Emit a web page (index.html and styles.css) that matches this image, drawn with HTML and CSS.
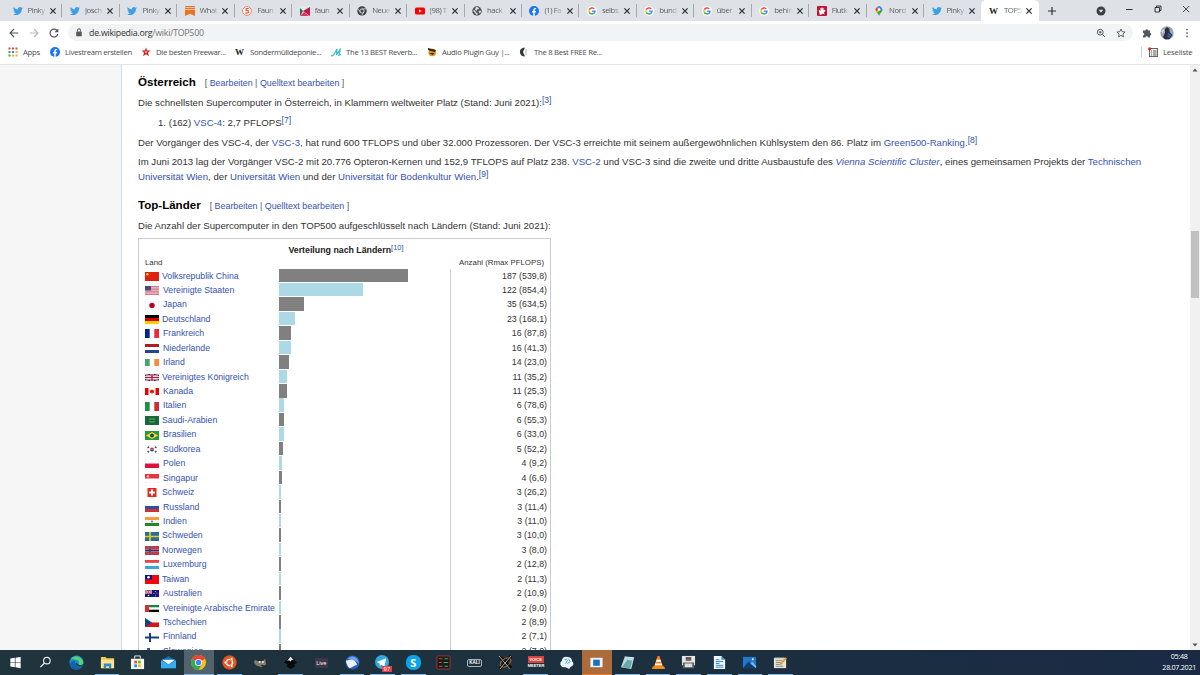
FILE: index.html
```html
<!DOCTYPE html>
<html lang="de">
<head>
<meta charset="utf-8">
<title>TOP500 – Wikipedia</title>
<link rel="stylesheet" href="styles.css">
</head>
<body>
<svg class="defs" aria-hidden="true">
<symbol id="bird" viewBox="0 0 24 24"><path fill="#3c9fe8" d="M24 4.6a10 10 0 0 1-2.8.8 5 5 0 0 0 2.1-2.7 10 10 0 0 1-3.1 1.2 4.9 4.9 0 0 0-8.4 4.5A14 14 0 0 1 1.700 3.100a4.900 4.900 0 0 0 1.500 6.600 5 5 0 0 1-2.200-.6 4.900 4.900 0 0 0 4 4.900 5 5 0 0 1-2.300.1 4.900 4.900 0 0 0 4.600 3.400A9.900 9.900 0 0 1 0 19.500 14 14 0 0 0 21.500 7.100 10 10 0 0 0 24 4.600z"/></symbol>
<symbol id="goog" viewBox="0 0 20 20"><circle cx="10" cy="10" r="10" fill="#fff"/><g fill="none" stroke-width="2.800"><path stroke="#ea4335" d="M14.500 5.800A6 6 0 0 0 4.600 7.300"/><path stroke="#fbbc05" d="M4.600 7.300a6 6 0 0 0 0 5.400"/><path stroke="#34a853" d="M4.600 12.700a6 6 0 0 0 9.100 2"/><path stroke="#4285f4" d="M13.700 14.700A6 6 0 0 0 16 10.200h-6"/></g></symbol>
<symbol id="fb" viewBox="0 0 20 20"><circle cx="10" cy="10" r="10" fill="#1877f2"/><path fill="#fff" d="M8.500 20v-7H6v-3h2.500V8c0-2.600 1.500-4 3.800-4l2 .2v2.500H13c-1.200 0-1.600.7-1.600 1.500V10h2.800l-.5 3h-2.300v7z"/></symbol>
<symbol id="x" viewBox="0 0 8 8"><path stroke="#333" stroke-width="1.300" d="M1.400 1.400l5.200 5.200M6.600 1.400L1.400 6.600"/></symbol>
<symbol id="chrome" viewBox="0 0 20 20"><circle cx="10" cy="10" r="10" fill="#fbc116"/><path fill="#ea4335" d="M10 10L1.300 5a10 10 0 0 1 17.400 0z"/><path fill="#34a853" d="M10 10L1.300 5A10 10 0 0 0 10 20l5-8z"/><circle cx="10" cy="10" r="4.800" fill="#fff"/><circle cx="10" cy="10" r="3.700" fill="#4285f4"/></symbol>
<symbol id="uj" viewBox="0 0 14 9" preserveAspectRatio="none"><path fill="#26336b" d="M0 0h14v9H0z"/><path stroke="#fff" stroke-width="1.800" d="M0 0l14 9M14 0L0 9"/><path stroke="#cf142b" stroke-width=".7" d="M0 0l14 9M14 0L0 9"/><path stroke="#fff" stroke-width="3" d="M7 0v9M0 4.500h14"/><path stroke="#cf142b" stroke-width="1.600" d="M7 0v9M0 4.500h14"/></symbol>
</svg>

<header class="tabs">
  <div class="tab"><svg><use href="#bird"/></svg><span>Pinky</span><svg class="close"><use href="#x"/></svg></div>
  <div class="tab"><svg><use href="#bird"/></svg><span>Josch</span><svg class="close"><use href="#x"/></svg></div>
  <div class="tab"><svg><use href="#bird"/></svg><span>Pinky</span><svg class="close"><use href="#x"/></svg></div>
  <div class="tab"><svg viewBox="0 0 10 10"><path fill="#e87521" d="M0 0h10v1.200H0zM0 2h10v1.200H0zM0 4h10v6L5 7.800 0 10z"/></svg><span>What</span><svg class="close"><use href="#x"/></svg></div>
  <div class="tab"><svg viewBox="0 0 12 12"><circle cx="6" cy="6" r="5.300" fill="#fff" stroke="#ed6b42"/><path fill="none" stroke="#e85125" stroke-width="1.300" d="M8 3H5v2.500h1.500a1.500 1.500 0 0 1 0 3H4"/></svg><span>Faun</span><svg class="close"><use href="#x"/></svg></div>
  <div class="tab"><svg viewBox="0 0 10 10"><path fill="#d8f0e2" d="M0 0h10v10H0z"/><path fill="#c2164c" d="M10 1v9L3 5z"/><path fill="#355f58" d="M0 2l3 3-3 5z"/><path fill="#e33458" d="M0 10l4-4 5 4z"/></svg><span>faun</span><svg class="close"><use href="#x"/></svg></div>
  <div class="tab"><svg viewBox="0 0 20 20"><circle cx="10" cy="10" r="9.500" fill="#3f4246"/><circle cx="10" cy="10" r="4.200" fill="none" stroke="#dee1e6" stroke-width="1.800"/><path stroke="#dee1e6" stroke-width="1.500" d="M10 5.800h8M6.400 12L2 5M13.500 12l-4 7"/></svg><span>Neue</span><svg class="close"><use href="#x"/></svg></div>
  <div class="tab"><svg viewBox="0 0 10 10"><rect y="1.500" width="10" height="7" rx="1.500" fill="red"/><path fill="#fff" d="M4 3.400v3.200L6.800 5z"/></svg><span>(98) T</span><svg class="close"><use href="#x"/></svg></div>
  <div class="tab"><svg viewBox="0 0 20 20"><circle cx="10" cy="10" r="9.500" fill="#505357"/><path fill="#dee1e6" d="M3 7l4 3 1 3 3 1v4l-3-1-2-4-3-2zM8 2l5 1 1 3-4 1-1 3-3-3zM13 10l4-1 1 3-3 3z"/></svg><span>hack</span><svg class="close"><use href="#x"/></svg></div>
  <div class="tab"><svg><use href="#fb"/></svg><span>(1) Fa</span><svg class="close"><use href="#x"/></svg></div>
  <div class="tab"><svg><use href="#goog"/></svg><span>selbs</span><svg class="close"><use href="#x"/></svg></div>
  <div class="tab"><svg><use href="#goog"/></svg><span>bund</span><svg class="close"><use href="#x"/></svg></div>
  <div class="tab"><svg><use href="#goog"/></svg><span>über</span><svg class="close"><use href="#x"/></svg></div>
  <div class="tab"><svg><use href="#goog"/></svg><span>behin</span><svg class="close"><use href="#x"/></svg></div>
  <div class="tab"><svg viewBox="0 0 20 20"><rect width="20" height="20" rx="2" fill="#c4122f"/><path fill="#fff" d="M5 17v-4L3 9l2-1 2 2V4l2-1 1 3 1-3 2 1v5l3-2 1 2-3 4 1 4-4-2-3 3z"/></svg><span>Flutk</span><svg class="close"><use href="#x"/></svg></div>
  <div class="tab"><svg viewBox="0 0 20 20"><path fill="#34a853" d="M10 20C9 15 3 12 3 7h14c0 5-6 8-7 13z"/><path fill="#fbbc04" d="M4 10l6-5 2 3-6 6z"/><path fill="#ea4335" d="M3 7q0-3 3-5l4 5-5 3z"/><path fill="#4285f4" d="M6 2q5-4 9 1 2 2 2 5l-5-1z"/><circle cx="10" cy="7" r="2.600" fill="#fff"/></svg><span>Nord</span><svg class="close"><use href="#x"/></svg></div>
  <div class="tab"><svg><use href="#bird"/></svg><span>Pinky</span><svg class="close"><use href="#x"/></svg></div>
  <div class="tab active"><b class="w">W</b><span>TOP5</span><svg class="close"><use href="#x"/></svg></div>
  <svg class="plus" viewBox="0 0 10 10"><path stroke="#333" stroke-width="1.200" d="M5 1v8M1 5h8"/></svg>
  <div class="win">
    <svg viewBox="0 0 10 10"><circle cx="5" cy="5" r="4.500" fill="#3c4043"/><path fill="#dee1e6" d="M2.700 3.800h4.600L5 6.800z"/></svg>
    <svg viewBox="0 0 10 10"><path stroke="#333" d="M2 5.500h6.500"/></svg>
    <svg viewBox="0 0 10 10"><path fill="none" stroke="#222" stroke-width=".9" d="M2 3.500h4.500V8H2zM3.500 3.500V2H8v4.500H6.500"/></svg>
    <svg viewBox="0 0 10 10"><path stroke="#222" stroke-width=".8" d="M2 2l6.200 6.200M8.200 2L2 8.200"/></svg>
  </div>
</header>

<nav class="toolbar">
  <svg viewBox="0 0 10 10"><path fill="none" stroke="#555" stroke-width="1.100" d="M9.200 5H1.200M5 1L1 5l4 4"/></svg>
  <svg viewBox="0 0 10 10"><path fill="none" stroke="#b8babd" stroke-width="1.100" d="M.8 5h8M5 1l4 4-4 4"/></svg>
  <svg viewBox="0 0 10 10"><path fill="none" stroke="#555" stroke-width="1.200" d="M8.300 3A3.900 3.900 0 1 0 8.800 6"/><path fill="#555" d="M9.300.5v3.800H5.500z"/></svg>
  <div class="omnibox">
    <svg class="lock" viewBox="0 0 8 9"><rect x="1.200" y="3.500" width="5.600" height="4.700" rx=".6" fill="#55585c"/><path fill="none" stroke="#55585c" stroke-width="1" d="M2.500 3.500V2.200a1.500 1.500 0 0 1 3 0v1.300"/></svg>
    <p>de.wikipedia.org<i>/wiki/TOP500</i></p>
    <svg viewBox="0 0 10 10"><circle cx="4.200" cy="4.200" r="2.900" fill="none" stroke="#55585c"/><path stroke="#55585c" d="M6.400 6.400L9 9M2.900 4.200h2.600M4.200 2.900v2.600"/></svg>
    <svg viewBox="0 0 10 10"><path fill="none" stroke="#55585c" stroke-width=".9" d="M5 1l1.200 2.700 2.900.3-2.200 2 .6 2.900L5 7.400 2.500 8.900l.6-2.900L.9 4l2.900-.3z"/></svg>
  </div>
  <svg class="ext" viewBox="0 0 20 20"><path fill="#55585c" d="M2 5h5a2.500 2.500 0 1 1 5 0h4v5a2.500 2.500 0 1 1 0 5v4h-4a2.500 2.500 0 0 0-5 0H2v-4a2.500 2.500 0 0 0 0-5z"/></svg>
  <svg class="avatar" viewBox="0 0 14 14"><circle cx="7" cy="7" r="6.700" fill="#9da5ae"/><path fill="#263042" d="M5 3l2-2 2.500 2v3l3 3-3 4.300H5L3 11l2-4z"/><path fill="#3a59a0" d="M8 7l3 1-1 4-3-1z"/><path fill="#d5d8d8" d="M1 5l3-2-1 5z"/></svg>
  <svg viewBox="0 0 10 10"><path fill="#55585c" d="M4.300.8h1.500v1.500H4.300zM4.300 4.300h1.500v1.500H4.300zM4.300 7.800h1.500v1.500H4.300z"/></svg>
</nav>

<nav class="bookmarks">
  <a class="bm-apps"><svg viewBox="0 0 10 10"><path fill="#e04a3a" d="M.5.500h2v2h-2zM4 .5h2v2H4zM7.500.500h2v2h-2z"/><path fill="#32a852" d="M.5 4h2v2h-2z"/><path fill="#3c7de0" d="M4 4h2v2H4z"/><path fill="#f0b323" d="M7.500 4h2v2h-2zM4 7.500h2v2H4zM7.500 7.500h2v2h-2z"/><path fill="#32a852" d="M.5 7.500h2v2h-2z"/></svg>Apps</a>
  <a class="bm-live"><svg><use href="#fb"/></svg>Livestream erstellen</a>
  <a class="bm-free"><svg viewBox="0 0 10 10"><path fill="#cf2a22" d="M5 .5l1.200 3h3.300L7 5.700l1 3.600-3-2-3 2 1-3.600L.5 3.500h3.300z"/><circle cx="5" cy="5" r="1" fill="#f4c9c3"/></svg>Die besten Freewar...</a>
  <a class="bm-sonder"><b class="w">W</b>Sondermülldeponie...</a>
  <a class="bm-reverb"><svg viewBox="0 0 10 10"><path fill="none" stroke="#43bccb" stroke-width="1.300" d="M0 8.500q2 1 3.500-2L6 2 5.500 8 9.500 1.500 8 8l2-.5"/></svg>The 13 BEST Reverb...</a>
  <a class="bm-audio"><svg viewBox="0 0 10 10"><circle cx="5.200" cy="5.500" r="3.800" fill="#d09a1d"/><path fill="#3c2415" d="M1 1l4 1 4 1-1 2-4-1-3-1zM2 6h5l-1 2z"/></svg>Audio Plugin Guy |...</a>
  <a class="bm-best"><svg viewBox="0 0 10 10"><path fill="#333a3c" d="M6 .5Q0 1 1 6q1 3.500 5 3.500L4 5z"/><path stroke="#b5bcbc" d="M7 2v6"/></svg>The 8 Best FREE Re...</a>
  <a class="bm-list"><svg viewBox="0 0 10 10"><rect x="1.500" y="1.500" width="8" height="8" fill="#eee" stroke="#666"/><path stroke="#666" d="M3 4h1M5 4h3.500M3 6h1M5 6h3.500M3 8h1M5 8h3.500"/><circle cx="1.600" cy="1.800" r="1.600" fill="#d93025"/></svg>Leseliste</a>
</nav>

<div class="page">
  <aside class="side"></aside>
  <main>
    <h3>Österreich<small>[ <a>Bearbeiten</a> | <a>Quelltext bearbeiten</a> ]</small></h3>
    <p class="p1">Die schnellsten Supercomputer in Österreich, in Klammern weltweiter Platz (Stand: Juni 2021):<sup>[3]</sup></p>
    <p class="item">1. (162) <a>VSC-4</a>: 2,7 PFLOPS<sup>[7]</sup></p>
    <p class="p2">Der Vorgänger des VSC-4, der <a>VSC-3</a>, hat rund 600 TFLOPS und über 32.000 Prozessoren. Der VSC-3 erreichte mit seinem außergewöhnlichen Kühlsystem den 86. Platz im <a>Green500-Ranking</a>.<sup>[8]</sup></p>
    <p class="p3">Im Juni 2013 lag der Vorgänger VSC-2 mit 20.776 Opteron-Kernen und 152,9 TFLOPS auf Platz 238. <a>VSC-2</a> und VSC-3 sind die zweite und dritte Ausbaustufe des <a><em>Vienna Scientific Cluster</em></a>, eines gemeinsamen Projekts der <a>Technischen<br>Universität Wien</a>, der <a>Universität Wien</a> und der <a>Universität für Bodenkultur Wien</a>.<sup>[9]</sup></p>
    <h3 class="top">Top-Länder<small>[ <a>Bearbeiten</a> | <a>Quelltext bearbeiten</a> ]</small></h3>
    <p class="p4">Die Anzahl der Supercomputer in den TOP500 aufgeschlüsselt nach Ländern (Stand: Juni 2021):</p>
    <section class="chart">
      <h4>Verteilung nach Ländern<sup>[10]</sup></h4>
      <div class="cols"><span>Land</span><span>Anzahl (Rmax PFLOPS)</span></div>
      <div class="row"><a class="n near"><svg viewBox="0 0 14 9"><path fill="#de2110" d="M0 0h14v9H0z"/><circle cx="2.300" cy="2.300" r="1.200" fill="#fd0"/></svg>Volksrepublik China</a><div class="b"><i style="width:129px"></i></div><span>187 (539,8)</span></div>
      <div class="row"><a class="n"><svg viewBox="0 0 14 9"><path fill="#f0d7da" d="M0 0h14v9H0z"/><path stroke="#cf6070" stroke-width=".8" d="M0 .5h14M0 2.100h14M0 3.700h14M0 5.300h14M0 6.900h14M0 8.500h14"/><path fill="#4a4b7c" d="M0 0h6v4.500H0z"/></svg>Vereinigte Staaten</a><div class="b"><i style="width:84px"></i></div><span>122 (854,4)</span></div>
      <div class="row"><a class="n"><svg viewBox="0 0 14 9"><path fill="#fff" stroke="#ddd" stroke-width=".6" d="M0 0h14v9H0z"/><circle cx="7" cy="4.500" r="2.700" fill="#b5002c"/></svg>Japan</a><div class="b"><i style="width:25px"></i></div><span>35 (634,5)</span></div>
      <div class="row"><a class="n near"><svg viewBox="0 0 14 9"><path d="M0 0h14v3H0z"/><path fill="#d00" d="M0 3h14v3H0z"/><path fill="#fc0" d="M0 6h14v3H0z"/></svg>Deutschland</a><div class="b"><i style="width:16px"></i></div><span>23 (168,1)</span></div>
      <div class="row"><a class="n"><svg viewBox="0 0 14 9"><path fill="#fff" d="M0 0h14v9H0z"/><path fill="#002395" d="M0 0h4.700v9H0z"/><path fill="#ed2939" d="M9.300 0H14v9H9.300z"/></svg>Frankreich</a><div class="b"><i style="width:12px"></i></div><span>16 (87,8)</span></div>
      <div class="row"><a class="n"><svg viewBox="0 0 14 9"><path fill="#fff" d="M0 0h14v9H0z"/><path fill="#ae1c28" d="M0 0h14v3H0z"/><path fill="#21468b" d="M0 6h14v3H0z"/></svg>Niederlande</a><div class="b"><i style="width:12px"></i></div><span>16 (41,3)</span></div>
      <div class="row"><a class="n"><svg viewBox="0 0 14 9"><path fill="#fff" d="M0 0h14v9H0z"/><path fill="#46a56c" d="M0 1h4.700v7H0z"/><path fill="#f58b45" d="M9.300 1H14v7H9.300z"/></svg>Irland</a><div class="b"><i style="width:10px"></i></div><span>14 (23,0)</span></div>
      <div class="row"><a class="n near"><svg viewBox="0 0 14 9"><use href="#uj" y="1" width="14" height="7"/></svg>Vereinigtes Königreich</a><div class="b"><i style="width:8px"></i></div><span>11 (35,2)</span></div>
      <div class="row"><a class="n"><svg viewBox="0 0 14 9"><path fill="#fff" d="M0 0h14v9H0z"/><path fill="#e00" d="M0 1h3.500v7H0zM10.500 1H14v7h-3.500zM7 2l.7 1.200 1.800.3-.8 1.500.3 1-1.700-.2V7.200h-.6V5.800L5 6l.3-1-.8-1.500 1.800-.3z"/></svg>Kanada</a><div class="b"><i style="width:8px"></i></div><span>11 (25,3)</span></div>
      <div class="row"><a class="n"><svg viewBox="0 0 14 9"><path fill="#fff" d="M0 0h14v9H0z"/><path fill="#209048" d="M0 0h4.700v9H0z"/><path fill="#ce2b37" d="M9.300 0H14v9H9.300z"/></svg>Italien</a><div class="b"><i style="width:5px"></i></div><span>6 (78,6)</span></div>
      <div class="row"><a class="n near"><svg viewBox="0 0 14 9"><path fill="#176a36" d="M0 0h14v9H0z"/><path stroke="#a5c9b0" stroke-width=".6" d="M4 3h6M4 5.800h6"/></svg>Saudi-Arabien</a><div class="b"><i style="width:5px"></i></div><span>6 (55,3)</span></div>
      <div class="row"><a class="n"><svg viewBox="0 0 14 9"><path fill="#229b3a" d="M0 0h14v9H0z"/><path fill="#f7dd22" d="M7 1l6 3.500L7 8 1 4.500z"/><circle cx="7" cy="4.500" r="2" fill="#293b87"/></svg>Brasilien</a><div class="b"><i style="width:5px"></i></div><span>6 (33,0)</span></div>
      <div class="row"><a class="n"><svg viewBox="0 0 14 9"><path fill="#fff" stroke="#ddd" stroke-width=".6" d="M0 0h14v9H0z"/><path fill="#c33651" d="M5 4.500a2 2 0 0 1 4 0z"/><path fill="#2f4785" d="M5 4.500a2 2 0 0 0 4 0z"/><path stroke="#444" stroke-width="1.400" d="M2.500 2.800l1.500-1M10 1.800l1.500 1M2.500 6.200l1.500 1M10 7.200l1.500-1"/></svg>Südkorea</a><div class="b"><i style="width:4px"></i></div><span>5 (52,2)</span></div>
      <div class="row"><a class="n"><svg viewBox="0 0 14 9"><path fill="#fff" stroke="#ddd" stroke-width=".6" d="M0 0h14v9H0z"/><path fill="#dc143c" d="M0 4.500h14V9H0z"/></svg>Polen</a><div class="b"><i style="width:3px"></i></div><span>4 (9,2)</span></div>
      <div class="row"><a class="n"><svg viewBox="0 0 14 9"><path fill="#fff" stroke="#ddd" stroke-width=".6" d="M0 0h14v9H0z"/><path fill="#e53440" d="M0 0h14v4.500H0z"/><circle cx="3" cy="2.200" r="1.200" fill="#f7bcc0"/></svg>Singapur</a><div class="b"><i style="width:3px"></i></div><span>4 (6,6)</span></div>
      <div class="row"><a class="n near"><svg viewBox="0 0 14 9"><path fill="#e52b1e" d="M2.500 0h9v9h-9z"/><path stroke="#fff" stroke-width="2" d="M7 1.600v5.800M4.100 4.500h5.800"/></svg>Schweiz</a><div class="b"><i style="width:2px"></i></div><span>3 (26,2)</span></div>
      <div class="row"><a class="n"><svg viewBox="0 0 14 9"><path fill="#fff" d="M0 0h14v9H0z"/><path fill="#2850a4" d="M0 3h14v3H0z"/><path fill="#d5302d" d="M0 6h14v3H0z"/></svg>Russland</a><div class="b"><i style="width:2px"></i></div><span>3 (11,4)</span></div>
      <div class="row"><a class="n"><svg viewBox="0 0 14 9"><path fill="#f5f5f5" d="M0 0h14v9H0z"/><path fill="#f79b3c" d="M0 0h14v3H0z"/><path fill="#218a22" d="M0 6h14v3H0z"/><circle cx="7" cy="4.500" r="1.100" fill="#7777a8"/></svg>Indien</a><div class="b"><i style="width:2px"></i></div><span>3 (11,0)</span></div>
      <div class="row"><a class="n near"><svg viewBox="0 0 14 9"><path fill="#286b9d" d="M0 0h14v9H0z"/><path stroke="#eccb20" stroke-width="1.700" d="M5 0v9M0 4.500h14"/></svg>Schweden</a><div class="b"><i style="width:2px"></i></div><span>3 (10,0)</span></div>
      <div class="row"><a class="n near"><svg viewBox="0 0 14 9"><path fill="#ce3343" d="M0 0h14v9H0z"/><path stroke="#ecc9d0" stroke-width="2.200" d="M5 0v9M0 4.500h14"/><path stroke="#26356d" stroke-width="1.500" d="M5 0v9M0 4.500h14"/></svg>Norwegen</a><div class="b"><i style="width:2px"></i></div><span>3 (8,0)</span></div>
      <div class="row"><a class="n"><svg viewBox="0 0 14 9"><path fill="#fff" d="M0 0h14v9H0z"/><path fill="#e74249" d="M0 0h14v2.800H0z"/><path fill="#35a7df" d="M0 6h14v3H0z"/></svg>Luxemburg</a><div class="b"><i style="width:1.500px"></i></div><span>2 (12,8)</span></div>
      <div class="row"><a class="n near"><svg viewBox="0 0 14 9"><path fill="#f20808" d="M0 0h14v9H0z"/><path fill="#10109a" d="M0 0h7v4.500H0z"/><circle cx="3.500" cy="2.300" r="1.300" fill="#fff"/></svg>Taiwan</a><div class="b"><i style="width:1.500px"></i></div><span>2 (11,3)</span></div>
      <div class="row"><a class="n"><svg viewBox="0 0 14 9"><path fill="#17157c" d="M0 1h14v7H0z"/><use href="#uj" y="1" width="7" height="4"/><circle cx="3.500" cy="6.500" r=".8" fill="#fff"/><path fill="#fff" d="M10 2h.8v.8H10zM8.500 4h.8v.8h-.8zM11.500 3.800h.8v.8h-.8zM10 6.500h.8v.8H10z"/></svg>Australien</a><div class="b"><i style="width:1.500px"></i></div><span>2 (10,9)</span></div>
      <div class="row"><a class="n"><svg viewBox="0 0 14 9"><path fill="#fff" d="M0 1h14v7H0z"/><path fill="#16804a" d="M0 1h14v2.300H0z"/><path d="M0 5.700h14V8H0z"/><path fill="#e02b30" d="M0 1h4v7H0z"/></svg>Vereinigte Arabische Emirate</a><div class="b"><i style="width:1.500px"></i></div><span>2 (9,0)</span></div>
      <div class="row"><a class="n"><svg viewBox="0 0 14 9"><path fill="#f6f6f6" d="M0 0h14v9H0z"/><path fill="#d7141a" d="M0 4.500h14V9H0z"/><path fill="#11457e" d="M0 0l7 4.500L0 9z"/></svg>Tschechien</a><div class="b"><i style="width:1.500px"></i></div><span>2 (8,9)</span></div>
      <div class="row"><a class="n"><svg viewBox="0 0 14 9"><path fill="#fff" d="M0 0h14v9H0z"/><path stroke="#163f7c" stroke-width="2" d="M5 0v9M0 4.500h14"/></svg>Finnland</a><div class="b"><i style="width:1.500px"></i></div><span>2 (7,1)</span></div>
      <div class="row"><a class="n"><svg viewBox="0 0 14 9"><path fill="#fff" d="M0 0h14v9H0z"/><path fill="#2155a5" d="M0 3h14v3H0z"/><path fill="#315c9c" d="M2 1h3v3H2z"/></svg>Slowenien</a><div class="b"><i style="width:1.500px"></i></div><span>2 (7,0)</span></div>
    </section>
  </main>
  <div class="scroll">
    <svg viewBox="0 0 8 8"><path fill="#555" d="M4 2.500L6.500 5.500h-5z"/></svg>
    <div class="thumb"></div>
    <svg viewBox="0 0 8 8"><path fill="#555" d="M4 5.500L1.500 2.500h5z"/></svg>
  </div>
</div>

<footer class="taskbar">
  <div class="app"><svg viewBox="0 0 16 16"><path fill="#fff" d="M2.500 3.600l4.800-.7v4.700H2.500zM8 2.800l5.500-.8v5.600H8zM2.500 8.300h4.800V13l-4.800-.7zM8 8.300h5.500V14L8 13.100z"/></svg></div>
  <div class="app"><svg viewBox="0 0 16 16"><circle cx="9.500" cy="6" r="3.500" fill="none" stroke="#eee" stroke-width="1.200"/><path stroke="#eee" stroke-width="1.300" d="M7 8.500L2.500 13"/></svg></div>
  <div class="app"><svg viewBox="0 0 16 16"><circle cx="8" cy="8" r="7.500" fill="#1794d8"/><path fill="#59d272" d="M2 4Q7-1 12 3q4 3 3 6-2 3-5 1 2-5-3-5-4-1-5-1z"/><path fill="#1462ab" d="M1 10q1-5 6-4-3 5 7 6-5 6-11 2z"/><path fill="#1d3440" d="M7 8q0 4 7 4l1-2q-4 2-6-1z"/></svg></div>
  <div class="app run"><svg viewBox="0 0 16 16"><path fill="#f5c64b" d="M1 2h5l1 1.500h8V14H1z"/><path fill="#ffe391" d="M1 5h14v9H1z"/><path fill="#2f8bd0" d="M4 9h8v5H9.500v-2h-3v2H4z"/></svg></div>
  <div class="app"><svg viewBox="0 0 16 16"><path fill="#f7f7f7" d="M1 4h14v11H1z"/><path fill="none" stroke="#eee" d="M5 4V1h6v3"/><path fill="#f35325" d="M4.500 6h3v3h-3z"/><path fill="#81bc06" d="M8.500 6h3v3h-3z"/><path fill="#05a6f0" d="M4.500 10h3v3h-3z"/><path fill="#ffba08" d="M8.500 10h3v3h-3z"/></svg></div>
  <div class="app"><svg viewBox="0 0 16 16"><path fill="#0f71bd" d="M0 6l8-5 8 5v8H0z"/><path fill="#eef8fe" d="M1 5h14L8 10z"/><path fill="#35aef0" d="M0 5.500l8 5 8-5V14H0z"/></svg></div>
  <div class="app run now"><svg><use href="#chrome"/></svg></div>
  <div class="app run"><svg viewBox="0 0 16 16"><circle cx="8" cy="8" r="7.700" fill="#e25420"/><circle cx="8" cy="8" r="3.300" fill="none" stroke="#fff" stroke-width="1.500"/><g fill="#fff" stroke="#e25420" stroke-width=".6"><circle cx="3.800" cy="8" r="1.500"/><circle cx="10.300" cy="4.200" r="1.500"/><circle cx="10.300" cy="11.800" r="1.500"/></g></svg></div>
  <div class="app"><svg viewBox="0 0 16 16"><path fill="#877967" d="M2 5l4 2 5-1 2-2 1 6-5 3-6-2-2-3z"/><circle cx="7" cy="7.500" r="1.200" fill="#ddd"/><circle cx="10.500" cy="7.500" r="1.200" fill="#ddd"/><path stroke="#222" stroke-width="1.500" d="M9 11l5 2"/></svg></div>
  <div class="app run"><svg viewBox="0 0 16 16"><path fill="#080a0c" d="M8 1l7 7-3 2 1 2-5 3-4-3 1-2-4-2z"/><path fill="#e8e8e8" d="M8 1.500l3.500 4-2-.5L8 7 6.500 5.500l-2 .5z"/></svg></div>
  <div class="app"><span class="live">Live</span></div>
  <div class="app run"><svg viewBox="0 0 16 16"><circle cx="8" cy="8" r="7.500" fill="#2c61bd"/><path fill="#edf2fb" d="M1 6l8-2 4 6-8 4q-3-2-4-8z"/><path fill="#6ea3eb" d="M3 4q5-5 10 0l2 5-4-3z"/></svg></div>
  <div class="app run"><svg viewBox="0 0 16 16"><circle cx="7.500" cy="7.500" r="7.500" fill="#32a8df"/><path fill="#fff" d="M2 7.500l10-4-2 9-3-2-2 1V9z"/></svg><span class="badge">97</span></div>
  <div class="app run"><svg viewBox="0 0 16 16"><rect width="16" height="16" rx="7" fill="#0aa5e8"/></svg><span class="skype">S</span></div>
  <div class="app"><svg viewBox="0 0 16 16"><rect x="1" y="1" width="14" height="14" rx="1" fill="#181b19" stroke="#a03a2f"/><path stroke="#d04e38" stroke-width="1.300" d="M3 4h4M3 8h3M3 12h4"/><path stroke="#46a76a" stroke-width="1.300" d="M9 4h4M8 8h5M9 12h4"/></svg></div>
  <div class="app"><span class="kali">KALI</span></div>
  <div class="app"><svg viewBox="0 0 16 16"><path stroke="#080808" stroke-width="3.200" d="M2 2l12 12M14 1L2 15"/><path stroke="#ddd" stroke-width=".8" d="M1 1l12 14M14 1L2 15"/><ellipse cx="8" cy="8" rx="6.500" ry="4" fill="none" stroke="#d57c28" stroke-width=".8" transform="rotate(-35 8 8)"/></svg></div>
  <div class="app run"><span class="voice"><b>VOICE</b>MEETER</span></div>
  <div class="app"><svg viewBox="0 0 16 16"><path fill="#e6f4fa" d="M4 13a4 4 0 0 1-1-7q1-5 6-4 5 0 5 5 2 1 1 4l-3 2-1 2-4-2z"/><path fill="none" stroke="#489abd" d="M6 5q3-1 3 1L7 9M10 4l2 3-3 2"/></svg></div>
  <div class="app orange"><svg viewBox="0 0 16 16"><path fill="#f1f3f5" d="M1.500 3h13v10h-13z"/><path fill="#156fc5" d="M4.500 5h7v6.500h-7z"/></svg></div>
  <div class="app run"><svg viewBox="0 0 16 16"><path fill="#b4dce2" d="M5 2l10 1-3 12-11-2z"/><path fill="#6ba7ad" d="M8 5l5 1-2 8-9-1z"/><path stroke="#eef" d="M5 2l10 1"/></svg></div>
  <div class="app run"><svg viewBox="0 0 16 16"><path fill="#f58220" d="M7 1h2l4 12H3z"/><path fill="#fff" d="M6 5h4l.8 2.300H5.200zM4.500 9h7l.6 2H4z"/><path fill="#f28a1d" d="M2 12h12l1 3H1z"/></svg></div>
  <div class="app run"><svg viewBox="0 0 16 16"><path fill="#e5e6e4" d="M1 1h14v10H1z"/><path fill="#555e61" d="M2 8h12v6H2zM5 2h6v4H5z"/><path fill="#ddd" d="M4 9h8v4H4z"/><path fill="#b43e36" d="M7 3h2v2H7z"/></svg></div>
  <div class="app run"><svg viewBox="0 0 16 16"><path fill="#f4f8fb" d="M2 1h8l4 4v10H2z"/><path fill="#258bd2" d="M10 1l4 4h-4z"/><path stroke="#2184c5" d="M4 5h4M4 7h8M4 9h4M4 11h8M4 13h8"/></svg></div>
  <div class="app run"><svg viewBox="0 0 16 16"><path fill="#2477c8" d="M1 2h14v12H1z"/><path fill="#103b70" d="M1 14l6-7 8 7z"/><path fill="#77b8ec" d="M9 9l2-2 4 5v2z"/><circle cx="11.500" cy="4.500" r="1" fill="#fff"/></svg></div>
  <div class="app run"><svg viewBox="0 0 16 16"><path fill="#e7e3d7" d="M1 3h13v11H1z"/><path stroke="#888" d="M3 6h7M3 8h6M3 10h5M3 12h8M2 3h10"/><path stroke="#e79a32" stroke-width="2" d="M8 10l6-7"/></svg></div>
  <div class="clock">05:48<br>28.07.2021</div>
</footer>
</body>
</html>
```
FILE: styles.css
```css
* { box-sizing: border-box; }
body {
  margin: 0; width: 1200px; height: 675px; overflow: hidden;
  display: flex; flex-direction: column; background: #fff;
  font: 9.640px/15px "Liberation Sans", Arial, sans-serif; color: #333;
}
p, h3, h4 { margin: 0; }
svg { display: block; flex: none; }
.defs { display: none; }
.w { font: 700 9px/10px "Liberation Serif", serif; width: 10px; flex: none; color: #222; }

/* tab strip */
.tabs { height: 21px; flex: none; background: #dee1e6; display: flex; align-items: center; padding-left: 5px; }
.tab { width: 57.450px; height: 21px; flex: none; display: flex; align-items: center; padding-left: 7.500px; position: relative; font: 7.800px/12px "Open Sans", sans-serif; letter-spacing: -.45px; color: #5b5e62; }
.tab::after { content: ""; position: absolute; right: 0; top: 4px; width: 1px; height: 13px; background: #a5a8ad; }
.tab svg, .tab .w { width: 10px; height: 10px; }
.tab span { width: 19px; margin-left: 5px; margin-top: -1px; white-space: nowrap; -webkit-mask-image: linear-gradient(90deg, #000 55%, rgba(0,0,0,.15) 95%); mask-image: linear-gradient(90deg, #000 55%, rgba(0,0,0,.15) 95%); }
.tab .close { width: 8px; height: 8px; margin-left: 2.500px; }
.tab.active { background: #fff; border-radius: 5px 5px 0 0; }
.tab:nth-child(17)::after, .tab.active::after { display: none; }
.plus { width: 10px; height: 10px; margin-left: 8px; }
.win { margin-left: auto; display: flex; gap: 18.500px; padding-right: 9px; }
.win svg { width: 10px; height: 10px; }
.win svg + svg { margin-top: -2px; }

/* address bar */
.toolbar { height: 22px; flex: none; display: flex; align-items: center; padding: 1px 8px 0 9px; }
.toolbar > svg { width: 10px; height: 10px; margin-right: 10px; }
.omnibox { width: 265px; flex: 1; height: 17px; margin-left: -1px; border-radius: 9px; background: #f1f3f4; display: flex; align-items: center; padding: 0 7px 0 7px; }
.omnibox .lock { width: 8px; height: 9px; margin-right: 6px; }
.omnibox p { flex: 1; font: 8.800px/14px "Open Sans", sans-serif; letter-spacing: -.25px; color: #333; }
.omnibox i { font-style: normal; color: #777; }
.omnibox svg:not(.lock) { width: 10px; height: 10px; margin-left: 10px; }
.toolbar > .ext { margin: 0 8px 0 9px; }
.toolbar > .avatar { width: 14px; height: 14px; margin-right: 8px; }
.toolbar > svg:last-child { margin-right: 0; }

/* bookmarks */
.bookmarks { height: 22px; flex: none; display: flex; align-items: center; padding: 0 0 3px 8px; border-bottom: 1px solid #e3e4e6; font: 7.800px/14px "Open Sans", sans-serif; letter-spacing: -.33px; color: #4a4d50; white-space: nowrap; }
.bookmarks a { display: flex; align-items: center; gap: 5px; flex: none; }
.bookmarks svg, .bookmarks .w { width: 10px; height: 10px; }
.bm-apps { width: 42px; }
.bm-live { width: 91px; }
.bm-free { width: 94px; }
.bm-sonder { width: 96px; }
.bm-reverb { width: 96px; }
.bm-audio { width: 92px; }
.bookmarks .bm-list { margin-left: auto; width: 59px; height: 10px; padding-left: 6px; border-left: 1px solid #ccc; letter-spacing: -.2px; }

/* article */
.page { flex: 1; min-height: 0; display: flex; overflow: hidden; }
.side { width: 122px; flex: none; background: #f6f6f6; border-right: 1px solid #c5def0; }
main { flex: 1; min-width: 0; padding: 10px 0 0 16px; white-space: nowrap; }
main a, sup { color: #3553ae; }
main a { text-decoration: none; }
sup { font-size: 8.600px; line-height: 0; font-weight: 400; vertical-align: 3.500px; }
h3 { height: 15px; font-size: 11.550px; line-height: 15px; color: #000; }
h3 small { font-size: 8.900px; font-weight: 400; margin-left: 9px; color: #54595d; }
.p1, .item, .p2 { margin-top: 5px; }
.item { padding-left: 20px; }
.p3 { margin-top: 4px; }
h3.top { margin-top: 14px; }
.p4 { margin-top: 5px; }

.chart { width: 413px; margin-top: 5px; border: 1px solid #c8ccd1; padding: 0 3px 0 6px; }
.chart h4 { font-size: 8.800px; line-height: 15px; padding-top: 4px; text-align: center; color: #222; }
.chart h4 sup { font-size: 7.500px; }
.cols { display: flex; justify-content: space-between; padding-right: 3px; font-size: 7.850px; line-height: 10.500px; color: #333; }
.row { display: flex; height: 14.440px; line-height: 14.440px; }
.row .n { width: 134px; flex: none; display: flex; align-items: center; gap: 4px; font-size: 8.720px; }
.row .near { gap: 3px; }
.row .n svg { width: 14px; height: 9px; margin-top: 1px; }
.row .b { width: 172px; flex: none; border-right: 1px solid #ccc; }
.row .b i { display: block; height: 13.500px; background: #add8e6; }
.row:nth-child(odd) .b i { background: #808080; }
.row span { flex: 1; text-align: right; font-size: 8.800px; }

.scroll { width: 10px; flex: none; background: #f1f1f1; display: flex; flex-direction: column; align-items: center; justify-content: space-between; padding: 1px 0; }
.scroll svg { width: 8px; height: 8px; }
.thumb { width: 8px; height: 67px; margin-top: 157px; margin-bottom: auto; background: #c1c1c1; }

/* taskbar */
.taskbar { height: 25px; flex: none; display: flex; background: linear-gradient(90deg, #20343d, #1c2f3f 60%, #1a2a45); color: #fff; }
.app { width: 30.620px; flex: none; display: flex; align-items: center; justify-content: center; position: relative; }
.app svg { width: 15px; height: 15px; }
.run::after { content: ""; position: absolute; left: 3px; right: 3px; bottom: 0; height: 1px; background: #83bde7; }
.now { background: #52636b; }
.now::after { left: 0; right: 0; }
.orange { background: #ac6b3b; border-bottom: 1px solid #ef7b27; }
.live { background: #40364c; font: 5.500px/10px "Open Sans", sans-serif; width: 13px; text-align: center; }
.badge { position: absolute; right: 6px; bottom: 3px; width: 10px; background: #e83a43; font: 6px/6px "Liberation Sans", sans-serif; text-align: center; }
.skype { position: absolute; font: 700 11px/14px "Open Sans", sans-serif; }
.kali { border: 1px solid #aab4b8; border-radius: 2px; font: 700 4.500px/6px "Liberation Sans", sans-serif; padding: 0 1px; }
.voice { width: 16px; font: 700 4px/6px "Liberation Sans", sans-serif; text-align: center; }
.voice b { display: block; background: #d9423d; line-height: 7px; }
.clock { margin-left: auto; padding: 1px 4px 0 0; font: 7.200px/11px "Open Sans", sans-serif; letter-spacing: -.3px; text-align: center; }
```
